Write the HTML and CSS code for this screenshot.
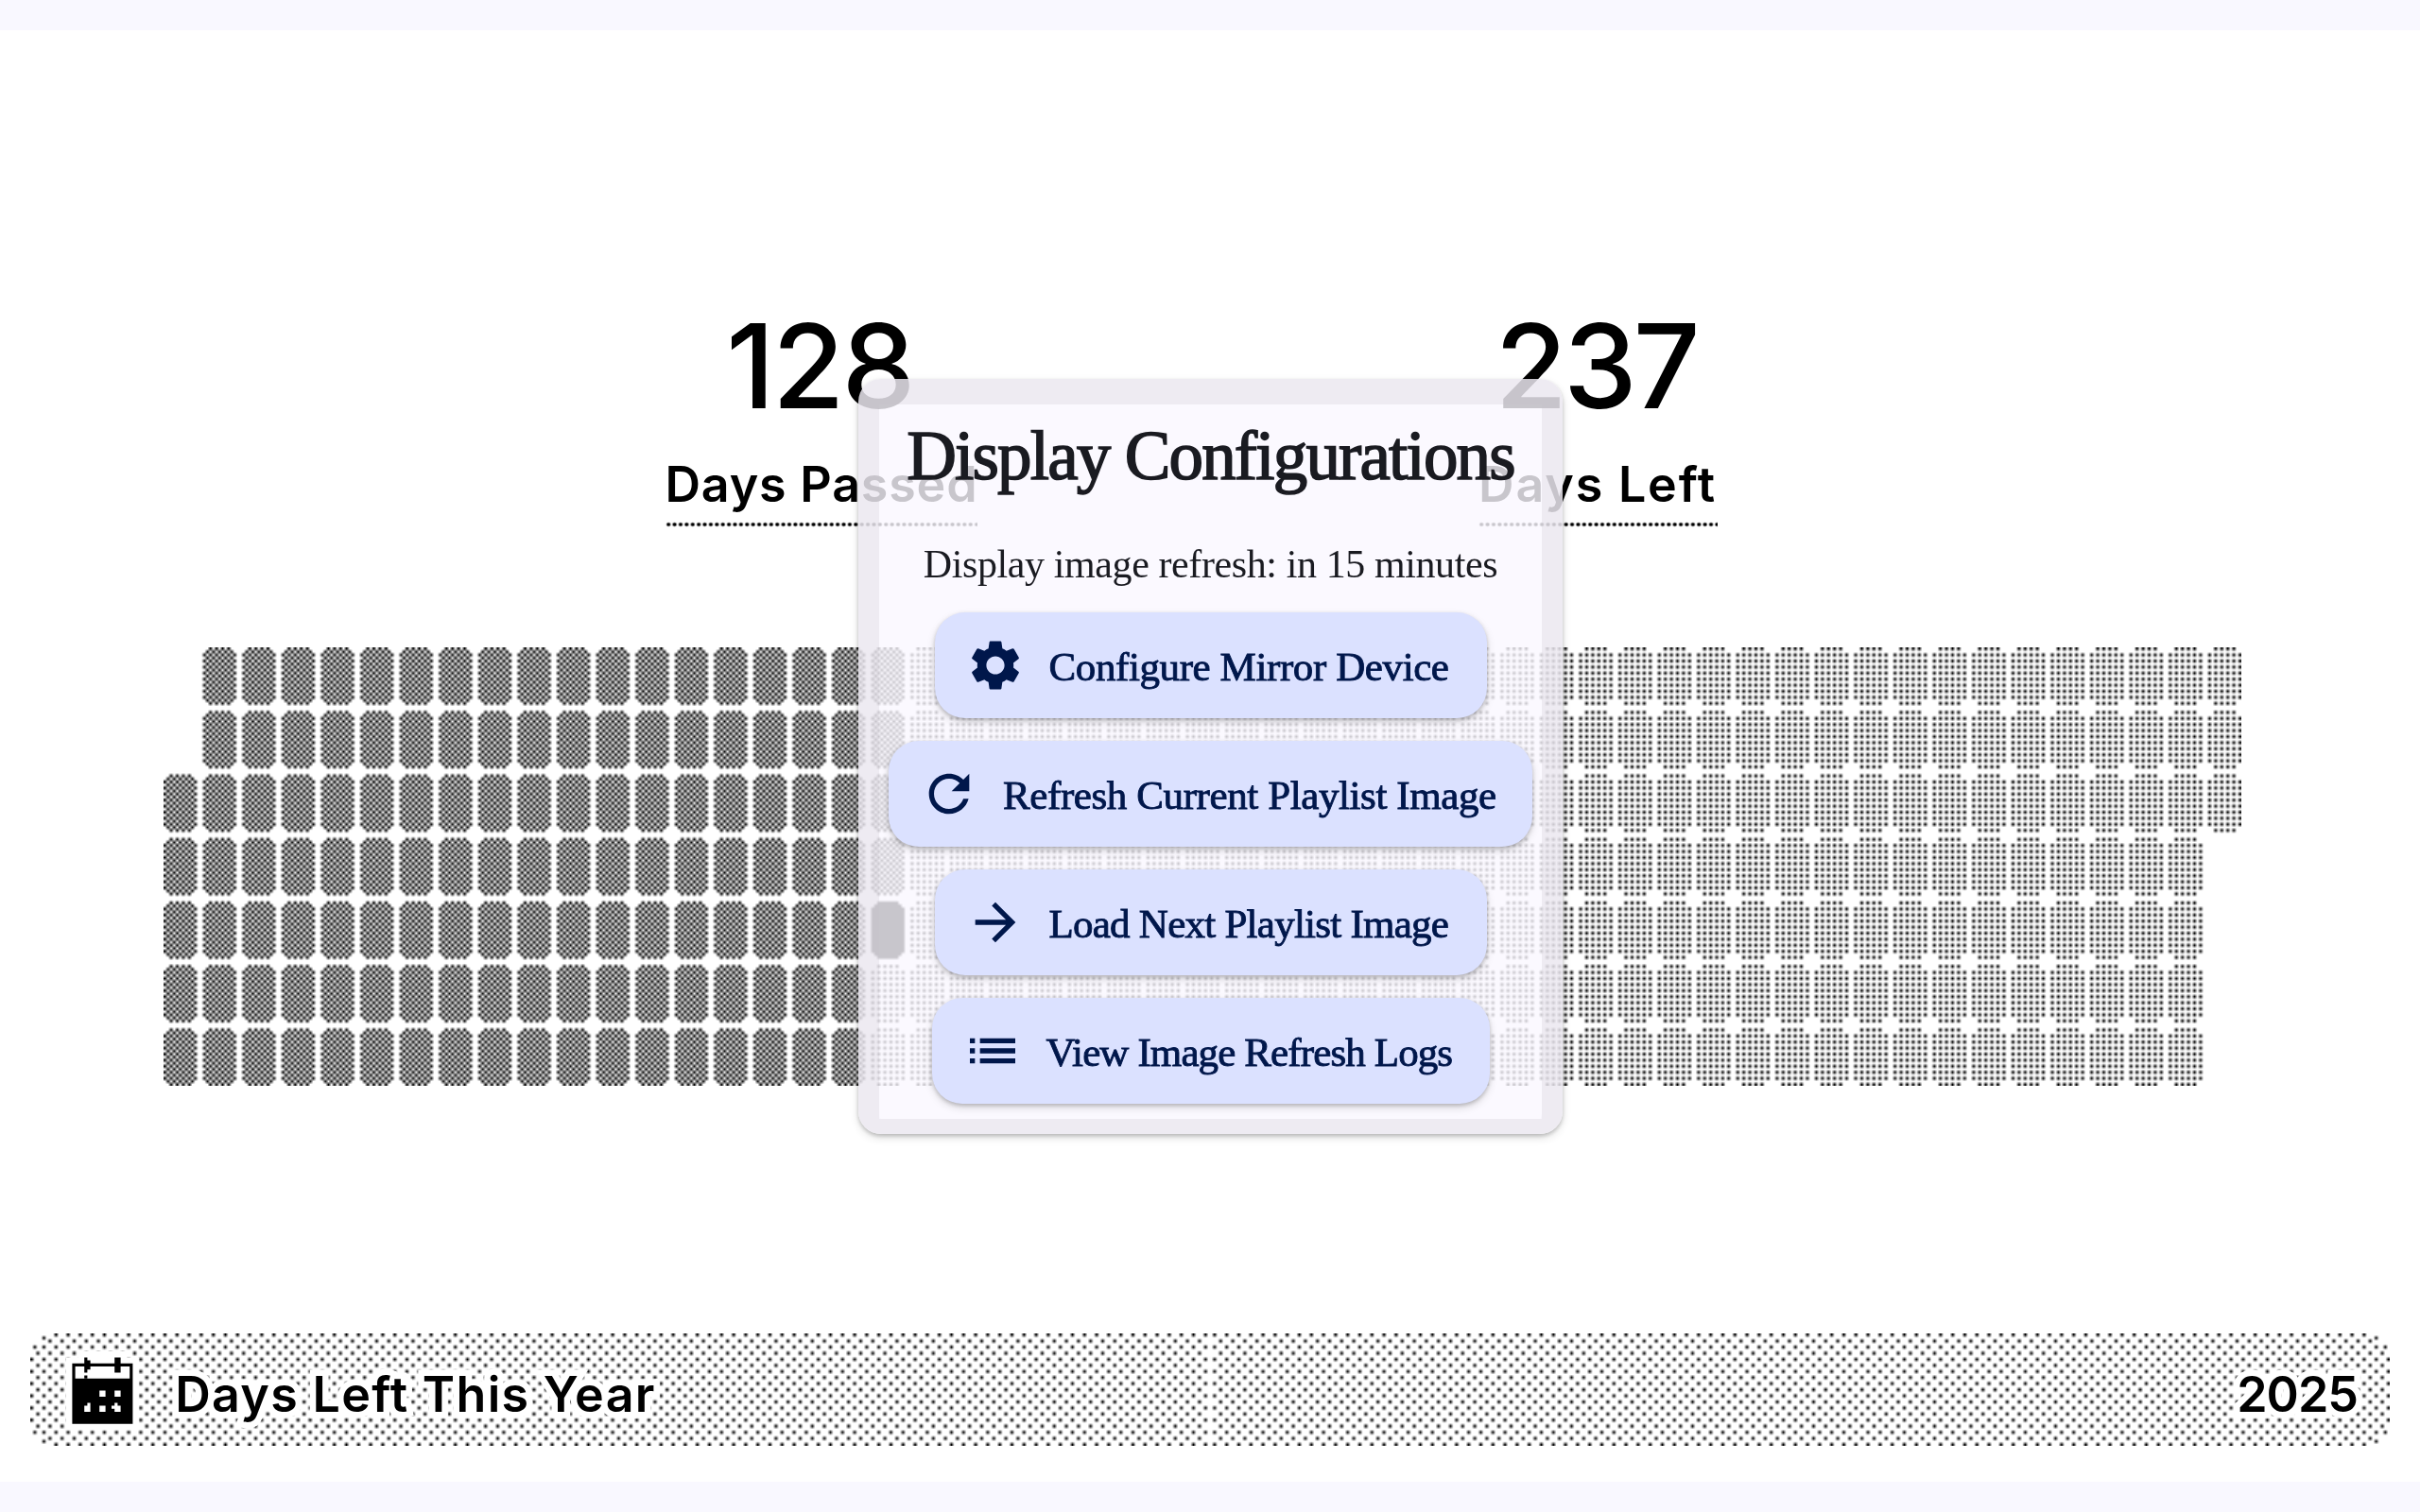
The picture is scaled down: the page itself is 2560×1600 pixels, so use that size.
FILE: index.html
```html
<!DOCTYPE html>
<html lang="en">
<head>
<meta charset="utf-8">
<title>Display Configurations</title>
<link rel="stylesheet" href="styles.css">
</head>
<body>
<main class="screen">
  <section class="stats">
    <div class="stat stat-passed"><span class="value">128</span><span class="label">Days Passed</span></div>
    <div class="stat stat-left"><span class="value">237</span><span class="label">Days Left</span></div>
  </section>
  <canvas class="year" id="year" width="687" height="145"></canvas>
  <footer class="titlebar">
    <canvas class="texture" id="texture" width="780" height="37"></canvas>
    <svg class="calendar" viewBox="22 437 24 26">
      <path d="M22 439h4v-2h16v2h4v24H22z" fill="#fff"/>
      <path d="M24 441h20v20H24z" fill="#000"/>
      <path d="M25 442h18v4H25z" fill="#fff"/>
      <path d="M28 439h1v1h1v3h-1v1h-1zM38 439h2v5h-2zM28 445h1v1h-1z" fill="#000"/>
      <path d="M33 450h2v2h-2zM38 450h2v2h-2zM29 454h1v3h-2v-2h1zM33 455h2v2h-2zM38 454h1v1h1v2h-2v-1h-1v-1h1z" fill="#fff"/>
    </svg>
    <span class="title">Days Left This Year</span>
    <span class="instance">2025</span>
  </footer>
</main>
<section class="dialog">
  <div class="panel">
    <h1>Display Configurations</h1>
    <p>Display image refresh: in 15 minutes</p>
    <button class="b1"><svg viewBox="0 0 24 24"><path d="M19.14 12.94c.04-.3.06-.61.06-.94 0-.32-.02-.64-.07-.94l2.03-1.58c.18-.14.23-.41.12-.61l-1.92-3.32c-.12-.22-.37-.29-.59-.22l-2.39.96c-.5-.38-1.03-.7-1.62-.94l-.36-2.54c-.04-.24-.24-.41-.48-.41h-3.84c-.24 0-.43.17-.47.41l-.36 2.54c-.59.24-1.13.57-1.62.94l-2.39-.96c-.22-.08-.47 0-.59.22L2.74 8.87c-.12.21-.08.47.12.61l2.03 1.58c-.05.3-.09.63-.09.94s.02.64.07.94l-2.03 1.58c-.18.14-.23.41-.12.61l1.92 3.32c.12.22.37.29.59.22l2.39-.96c.5.38 1.03.7 1.62.94l.36 2.54c.05.24.24.41.48.41h3.84c.24 0 .44-.17.47-.41l.36-2.54c.59-.24 1.13-.56 1.62-.94l2.39.96c.22.08.47 0 .59-.22l1.92-3.32c.12-.22.07-.47-.12-.61l-2.01-1.58zM12 15.6c-1.98 0-3.6-1.62-3.6-3.6s1.62-3.6 3.6-3.6 3.6 1.62 3.6 3.6-1.62 3.6-3.6 3.6z"/></svg><span>Configure Mirror Device</span></button>
    <button class="b2"><svg viewBox="0 0 24 24"><path d="M17.65 6.35C16.2 4.9 14.21 4 12 4c-4.42 0-7.99 3.58-7.99 8s3.57 8 7.99 8c3.73 0 6.84-2.55 7.73-6h-2.08c-.82 2.33-3.04 4-5.65 4-3.31 0-6-2.69-6-6s2.69-6 6-6c1.66 0 3.14.69 4.22 1.78L13 11h7V4l-2.35 2.35z"/></svg><span>Refresh Current Playlist Image</span></button>
    <button class="b3"><svg viewBox="0 0 24 24"><path d="M12 4l-1.41 1.41L16.17 11H4v2h12.17l-5.58 5.59L12 20l8-8z"/></svg><span>Load Next Playlist Image</span></button>
    <button class="b4"><svg viewBox="0 0 24 24"><path d="M3 13h2v-2H3v2zm0 4h2v-2H3v2zm0-8h2V7H3v2zm4 4h14v-2H7v2zm0 4h14v-2H7v2zM7 7v2h14V7H7z"/></svg><span>View Image Refresh Logs</span></button>
  </div>
</section>
<script src="script.js"></script>
</body>
</html>
```
FILE: styles.css
```css
* { box-sizing: border-box; }
body {
  margin: 0;
  width: 2560px;
  height: 1600px;
  padding: 32px 0;
  overflow: hidden;
  background: #f9f8ff;
}
.screen {
  display: flex;
  flex-direction: column;
  height: 1536px;
  padding: 290px 32px 38.4px;
  background: #fff;
  color: #000;
  font-family: Inter, "Liberation Sans", sans-serif;
}
.stats { display: flex; flex: none; height: 362.8px; padding-left: 671.5px; gap: 530px; }
.stat { display: flex; flex-direction: column; align-items: center; }
.stat-passed { width: 330px; }
.stat-left { width: 253px; }
.value { height: 130px; line-height: 130px; font-size: 124px; font-weight: 500; letter-spacing: -2.8px; margin-left: -3px; }
.stat-left .value { letter-spacing: -4px; margin-left: -4px; }
.label {
  width: 100%;
  height: 106px;
  padding-top: 21px;
  line-height: 80px;
  text-align: center;
  white-space: nowrap;
  font-size: 52px;
  font-weight: 600;
  letter-spacing: .8px;
  background: radial-gradient(circle at center, #000 1.1px, #0000 2.9px) 0 100% / 6.4px 6.4px repeat-x;
}
.stat-left .label { letter-spacing: 1.8px; }
.year { width: 2198.4px; height: 464px; margin-left: 140.8px; flex: none; }
.titlebar {
  position: relative;
  display: flex;
  align-items: center;
  height: 118.4px;
  margin-top: auto;
  padding: 0 34px 0 38.4px;
  font-size: 52px;
  font-weight: 600;
}
.texture { position: absolute; left: 0; top: 0; width: 2496px; height: 118.4px; }
.calendar, .title, .instance { position: relative; }
.calendar { width: 76.8px; height: 83.2px; margin-top: 3.2px; }
.title, .instance {
  padding-top: 11px;
  -webkit-text-stroke: 13px #fff;
  paint-order: stroke fill;
  white-space: nowrap;
  letter-spacing: 1.3px;
}
.title { margin-left: 38px; }
.instance { margin-left: auto; letter-spacing: -1px; }
.dialog {
  position: absolute;
  left: 908px;
  top: 401px;
  width: 745px;
  height: 799px;
  padding: 27px 22px 16px;
  border-radius: 24px;
  box-shadow: 0 2px 4px #0003, 0 4px 10px #0002;
}
.dialog::before {
  content: "";
  position: absolute;
  inset: 0;
  border: solid #ebe7f0d8;
  border-width: 27px 22px 16px;
  border-radius: 24px;
}
.panel {
  position: relative;
  display: flex;
  flex-direction: column;
  align-items: center;
  height: 756px;
  background: #faf7ffcc;
  color: #1a1b21;
  font-family: "Liberation Serif", serif;
  font-feature-settings: "liga" 1;
}
h1 {
  flex: none;
  margin: 17px 0 0;
  height: 122px;
  line-height: 76px;
  font-size: 73px;
  font-weight: 400;
  white-space: nowrap;
  letter-spacing: -1.85px;
  -webkit-text-stroke: 1.6px currentColor;
}
p {
  flex: none;
  height: 81px;
  margin: 0;
  line-height: 60px;
  font-size: 42px;
  white-space: nowrap;
  letter-spacing: -.4px;
}
button {
  display: flex;
  flex: none;
  align-items: center;
  gap: 25px;
  height: 112px;
  margin-bottom: 24px;
  padding: 0 0 0 32px;
  border: 0;
  border-radius: 32px;
  background: #dbe1ff;
  color: #00174b;
  font: 43px "Liberation Serif", serif;
  font-feature-settings: "liga" 1;
  white-space: nowrap;
  letter-spacing: -.4px;
  -webkit-text-stroke: .9px currentColor;
  box-shadow: 0 2px 4px #0003, 0 4px 10px #0002;
}
button:last-child { margin-bottom: 0; }
button span { padding-top: 2px; }
button svg { width: 64px; height: 64px; fill: currentColor; stroke: none; flex: none; }
.b1, .b3 { width: 584px; }
.b2 { width: 681px; }
.b3 { letter-spacing: -.75px; }
.b4 { width: 590px; letter-spacing: -.88px; }
```
FILE: script.js
```js
const year = document.getElementById('year').getContext('2d');
const PASSED = 128, TOTAL = 365, FIRST_ROW = 2;
for (let day = 0; day < TOTAL; day++) {
  const slot = day + FIRST_ROW;
  const left = Math.floor(slot / 7) * 13, top = (slot % 7) * 21;
  for (let y = 0; y < 19; y++) {
    const inset = Math.max(0, 2 - Math.min(y, 18 - y));
    for (let x = inset; x < 11 - inset; x++) {
      const on = day === PASSED || (day < PASSED ? (x + y) % 2 === 0 : x % 2 === 0 && y % 2 === 0);
      if (on) year.fillRect(left + x, top + y, 1, 1);
    }
  }
}
const bar = document.getElementById('texture').getContext('2d');
const insets = [8, 4, 3, 1];
for (let y = 0; y < 37; y += 2) {
  const edge = insets[Math.min(y, 36 - y) / 2] || 0;
  for (let x = y % 4 === 0 ? 0 : 2; x < 390; x += 4) {
    if (x < edge) continue;
    bar.fillRect(x, y, 1, 1);
    bar.fillRect(779 - x, y, 1, 1);
  }
}
for (const x of [4, 775]) { bar.fillRect(x, 1, 1, 1); bar.fillRect(x, 35, 1, 1); }
for (const x of [1, 778]) { bar.fillRect(x, 4, 1, 1); bar.fillRect(x, 32, 1, 1); }
```
